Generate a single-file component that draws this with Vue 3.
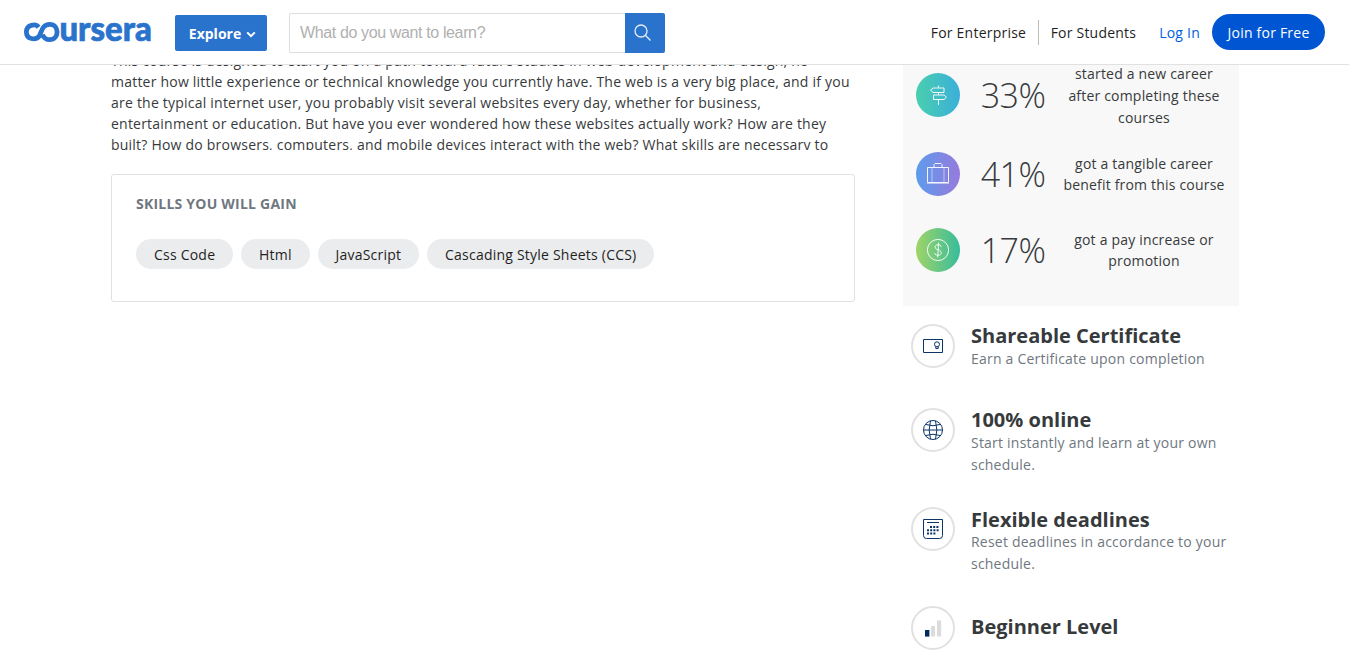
<script setup>
const paragraph = [
  'This course is designed to start you on a path toward future studies in web development and design, no',
  'matter how little experience or technical knowledge you currently have. The web is a very big place, and if you',
  'are the typical internet user, you probably visit several websites every day, whether for business,',
  'entertainment or education. But have you ever wondered how these websites actually work? How are they',
  'built? How do browsers, computers, and mobile devices interact with the web? What skills are necessary to'
]
const skills = ['Css Code', 'Html', 'JavaScript', 'Cascading Style Sheets (CCS)']
const stats = [
  { icon: 'sign', value: '33%', lines: ['started a new career', 'after completing these', 'courses'] },
  { icon: 'case', value: '41%', lines: ['got a tangible career', 'benefit from this course'] },
  { icon: 'money', value: '17%', lines: ['got a pay increase or', 'promotion'] }
]
const features = [
  { icon: 'cert', title: 'Shareable Certificate', lines: ['Earn a Certificate upon completion'] },
  { icon: 'globe', title: '100% online', lines: ['Start instantly and learn at your own', 'schedule.'] },
  { icon: 'calendar', title: 'Flexible deadlines', lines: ['Reset deadlines in accordance to your', 'schedule.'] },
  { icon: 'level', title: 'Beginner Level', lines: [] }
]
</script>

<template>
  <div class="page">
    <header class="header">
      <svg class="logo" width="128" height="22" viewBox="0 0 128 22">
        <path d="M14.6 5.2C11.5 1.2 2.4 2.6 2.4 10S11.4 18.6 15 14.4C17.6 11.2 17.6 2.3 25.6 2.3C35.6 2.3 35.6 17.7 25.6 17.7C21.8 17.7 19.6 15.4 18.4 12.6" />
        <text x="35.4" y="18.8" textLength="92.4" lengthAdjust="spacingAndGlyphs">ursera</text>
      </svg>
      <button class="explore">Explore
        <svg width="10" height="7" viewBox="0 0 10 7"><path d="M1.2 1.4 5 5.2 8.8 1.4" /></svg>
      </button>
      <div class="search">
        <div class="field">What do you want to learn?</div>
        <button class="go">
          <svg width="18" height="18" viewBox="0 0 18 18"><circle cx="7" cy="7" r="6" /><path d="M11.3 11.3 16.5 16.5" /></svg>
        </button>
      </div>
      <nav class="nav">
        <a class="enterprise">For Enterprise</a>
        <a class="students">For Students</a>
        <a class="login">Log In</a>
        <a class="join">Join for Free</a>
      </nav>
    </header>

    <main class="content">
      <section class="left">
        <div class="about">
          <p><span v-for="l in paragraph" :key="l">{{ l }}</span></p>
        </div>
        <div class="skills">
          <h2>SKILLS YOU WILL GAIN</h2>
          <div class="chips"><span v-for="s in skills" :key="s" class="chip">{{ s }}</span></div>
        </div>
      </section>

      <aside class="right">
        <div class="stats">
          <div v-for="s in stats" :key="s.value" class="stat" :class="'stat-' + s.icon">
            <span class="disc" :class="s.icon">
              <svg v-if="s.icon === 'sign'" width="24" height="24" viewBox="0 0 24 24">
                <path d="M12.5 2.5V5M12.5 9.5V12M12.5 16.5V22M18 5H7L4.5 7.2 7 9.5H18ZM7.5 12H18L20.5 14.3 18 16.5H7.5Z" />
              </svg>
              <svg v-else-if="s.icon === 'case'" width="24" height="24" viewBox="0 0 24 24">
                <path d="M1.5 5.5H22.5V20.5H1.5ZM8 5V2.5L9 1.5H15L16 2.5V5" />
                <path class="faint" d="M6 5.5V20M18 5.5V20M1 21.5H23" />
              </svg>
              <svg v-else width="24" height="24" viewBox="0 0 24 24">
                <circle cx="12" cy="12" r="10.6" />
                <path d="M15.3 8.8C15 7.4 13.8 6.7 12.1 6.7C8.2 6.7 8 11 12 11.8C16.4 12.7 16.2 17.3 12.1 17.3C10.2 17.3 8.9 16.5 8.6 15M12.6 4.6 11.7 19.4" />
              </svg>
            </span>
            <span class="value">{{ s.value }}</span>
            <span class="caption"><span v-for="l in s.lines" :key="l">{{ l }}</span></span>
          </div>
        </div>

        <div class="features">
          <div v-for="f in features" :key="f.title" class="feature" :class="'f-' + f.icon">
            <span class="ring">
              <svg v-if="f.icon === 'cert'" width="20" height="20" viewBox="0 0 20 20">
                <path d="M.5 3.5H19.5V16.5H.5ZM12.8 10.5V12.5H15.2V10.5" /><circle cx="14" cy="8.3" r="2.5" />
              </svg>
              <svg v-else-if="f.icon === 'globe'" width="20" height="20" viewBox="0 0 20 20">
                <circle cx="10" cy="10" r="9.5" />
                <path d="M.5 10H19.5M3 4.5Q10 7 17 4.5M3 15.5Q10 13 17 15.5M7.5 .8Q4.8 10 7.5 19.2M12.5 .8Q15.2 10 12.5 19.2" />
              </svg>
              <svg v-else-if="f.icon === 'calendar'" width="20" height="20" viewBox="0 0 20 20">
                <path d="M.5 .5H19.5V16.5Q19.5 19.5 16.5 19.5H3.5Q.5 19.5 .5 16.5ZM4 3.5H16" />
                <path class="dots" d="M7 8H16M4 11.3H16M4 14.6H13" />
              </svg>
              <svg v-else width="20" height="20" viewBox="0 0 20 20">
                <path class="bar on" d="M2 12H6.4V18.6H2Z" /><path class="bar" d="M8 8H12V18.5H8ZM14 2.5H18.2V18.5H14Z" />
              </svg>
            </span>
            <div class="words">
              <h3>{{ f.title }}</h3>
              <p v-if="f.lines.length"><span v-for="l in f.lines" :key="l">{{ l }}</span></p>
            </div>
          </div>
        </div>
      </aside>
    </main>
  </div>
</template>

<style>
html, body { margin: 0; overflow: hidden; background: #fff; }
</style>

<style scoped>
* { box-sizing: border-box; }
.page { width: 1349px; height: 654px; overflow: hidden; font: 14px/21px "Open Sans", "Noto Sans", sans-serif; letter-spacing: .22px; color: #373a3c; }
h2, h3, p { margin: 0; }
button { border: 0; padding: 0; font: inherit; }
svg { display: block; fill: none; }
.header { display: flex; align-items: center; height: 65px; padding: 0 24px; border-bottom: 1px solid #e1e1e1; background: #fff; position: relative; z-index: 2; }
.logo { margin-top: 2px; overflow: visible; flex: none; letter-spacing: 0; }
.logo path { stroke: #2a73cc; stroke-width: 4.8; }
.logo text { fill: #2a73cc; stroke: #2a73cc; stroke-width: .7; font: 900 34px "Lato", sans-serif; }
.explore { display: flex; align-items: center; justify-content: center; gap: 5px; width: 92px; height: 36px; margin: 2px 0 0 23px; padding-left: 3px; border-radius: 2px; background: #2a73cc; color: #fff; font-weight: 700; letter-spacing: 0; }
.explore svg { margin-top: 3px; stroke: #fff; stroke-width: 2; }
.search { display: flex; width: 376px; height: 40px; margin: 2px 0 0 22px; }
.field { width: 336px; border: 1px solid #dedede; border-right: 0; border-radius: 2px 0 0 2px; padding-left: 10px; font: 300 16px/38px "Liberation Sans", Arial, sans-serif; letter-spacing: -.37px; color: #b0b0b0; }
.go { display: flex; align-items: center; width: 40px; padding-left: 9px; border-radius: 0 2px 2px 0; background: #2a73cc; }
.go svg { stroke: #e4edf8; stroke-width: 1.3; }
.nav { display: flex; align-items: center; margin-left: auto; color: #1f1f1f; height: 36px; }
.nav a { white-space: nowrap; }
.enterprise { height: 25px; line-height: 25px; padding-right: 12px; border-right: 1px solid #bdbdbd; }
.students { padding-left: 11.5px; }
.login { margin-left: 23px; color: #0061e0; }
.join { width: 113px; height: 36px; margin-left: 12px; border-radius: 18px; background: #0056d2; color: #fff; text-align: center; line-height: 37px; }
.content { display: flex; justify-content: space-between; width: 1128px; margin-left: 111px; }
.left { width: 744px; }
.about { height: 85px; overflow: hidden; }
.about p { margin-top: -15px; }
.about span, .caption span, .words p span { display: block; white-space: nowrap; }
.skills { height: 128px; margin-top: 24px; padding: 18px 24px; border: 1px solid #e1e1e1; border-radius: 3px; }
.skills h2 { font-size: 14px; line-height: 21px; color: #6f7780; }
.chips { display: flex; gap: 8px; margin-top: 25px; }
.chip { height: 30px; padding: 0 17.8px 0 18px; border-radius: 15px; background: #ebecee; color: #1f1f1f; line-height: 31px; }
.right { width: 336px; }
.stats { height: 241px; padding: 0 13px; background: #f8f8f8; overflow: hidden; }
.stat { display: flex; align-items: center; height: 76px; }
.stat-sign { height: 65px; margin-top: -3px; margin-bottom: 9px; }
.disc { display: flex; align-items: center; justify-content: center; width: 44px; height: 44px; border-radius: 50%; flex: none; }
.disc svg { stroke: #fff; stroke-width: 1; stroke-opacity: .9; }
.disc .faint { stroke-opacity: .5; }
.sign { background: linear-gradient(90deg, #49cfae, #3bafda); }
.case { background: linear-gradient(90deg, #5d9cec, #967adc); }
.money { background: linear-gradient(90deg, #a0d468, #37bc9b); }
.value { width: 74px; margin-left: 16px; text-align: center; font-size: 34px; font-weight: 300; line-height: 44px; letter-spacing: -.6px; }
.stat-sign .value { padding-top: 1px; }
.caption { flex: 1; margin: 0 -6px 0 6px; text-align: center; line-height: 21px; letter-spacing: .19px; }
.stat-sign .caption { padding-top: 2px; line-height: 22px; }
.features { display: grid; grid-template-rows: 84px 99px 99px 60px; padding: 18px 0 0 8px; }
.feature { display: flex; align-items: flex-start; gap: 16px; }
.ring { display: flex; align-items: center; justify-content: center; width: 44px; height: 44px; border: 2px solid #e1e1e1; border-radius: 50%; flex: none; }
.ring svg { stroke: #0b3468; stroke-width: 1; }
.ring .dots { stroke-width: 2; stroke-dasharray: 2 1.2; }
.ring .bar { fill: #dcdcdc; stroke: none; }
.ring .on { fill: #002b5c; }
.words h3 { font-size: 20px; line-height: 24px; white-space: nowrap; letter-spacing: 0; }
.words p { line-height: 22px; color: #6f7780; }
.f-calendar h3 { padding-top: 1px; line-height: 23px; }
.f-level .words { padding-top: 9px; }
</style>
